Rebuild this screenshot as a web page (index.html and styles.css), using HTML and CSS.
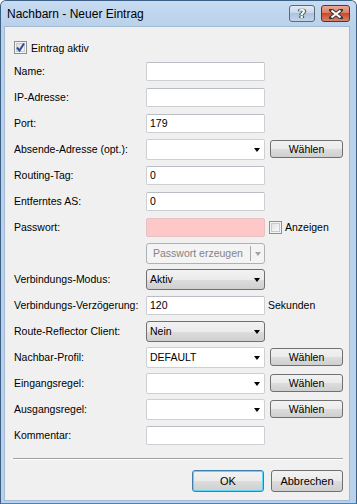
FILE: index.html
```html
<!DOCTYPE html>
<html lang="de">
<head>
<meta charset="utf-8">
<title>Nachbarn - Neuer Eintrag</title>
<link rel="stylesheet" href="styles.css">
</head>
<body>
<div class="window">
  <div class="titlebar">
    <span class="title">Nachbarn - Neuer Eintrag</span>
    <div class="caption-btns">
      <div class="cap-btn help">?</div>
      <div class="cap-btn close">
        <svg width="14" height="10" viewBox="0 0 14 10"><path d="M2 1 L12 9 M12 1 L2 9" stroke="#3a3a3a" stroke-width="4" stroke-linecap="square"/><path d="M2.5 1.5 L11.5 8.5 M11.5 1.5 L2.5 8.5" stroke="#fff" stroke-width="2"/></svg>
      </div>
    </div>
  </div>
  <div class="client">
    <div class="check-row">
      <span class="checkbox checked"><svg width="11" height="11" viewBox="0 0 11 11"><path d="M2 5.5 L4.5 8.5 L9 1.5" fill="none" stroke="#2b4f9c" stroke-width="2"/></svg></span>
      <span class="check-label">Eintrag aktiv</span>
    </div>
    <div class="form">
      <div class="row"><span class="label">Name:</span><span class="input"></span></div>
      <div class="row"><span class="label">IP-Adresse:</span><span class="input"></span></div>
      <div class="row"><span class="label">Port:</span><span class="input">179</span></div>
      <div class="row"><span class="label">Absende-Adresse (opt.):</span><span class="combo"><span class="val"></span><span class="arrow"></span></span><span class="btn small">Wählen</span></div>
      <div class="row"><span class="label">Routing-Tag:</span><span class="input">0</span></div>
      <div class="row"><span class="label">Entferntes AS:</span><span class="input">0</span></div>
      <div class="row"><span class="label">Passwort:</span><span class="input pink"></span><span class="extra-check"><span class="checkbox"></span><span class="check-label">Anzeigen</span></span></div>
      <div class="row"><span class="label"></span><span class="split-btn"><span class="split-text">Passwort erzeugen</span><span class="split-div"></span><span class="arrow gray"></span></span></div>
      <div class="row"><span class="label">Verbindungs-Modus:</span><span class="dropbtn"><span class="val">Aktiv</span><span class="arrow"></span></span></div>
      <div class="row"><span class="label">Verbindungs-Verzögerung:</span><span class="input">120</span><span class="unit">Sekunden</span></div>
      <div class="row"><span class="label">Route-Reflector Client:</span><span class="dropbtn"><span class="val">Nein</span><span class="arrow"></span></span></div>
      <div class="row"><span class="label">Nachbar-Profil:</span><span class="combo"><span class="val">DEFAULT</span><span class="arrow"></span></span><span class="btn small">Wählen</span></div>
      <div class="row"><span class="label">Eingangsregel:</span><span class="combo"><span class="val"></span><span class="arrow"></span></span><span class="btn small">Wählen</span></div>
      <div class="row"><span class="label">Ausgangsregel:</span><span class="combo"><span class="val"></span><span class="arrow"></span></span><span class="btn small">Wählen</span></div>
      <div class="row"><span class="label">Kommentar:</span><span class="input"></span></div>
    </div>
    <div class="separator"></div>
    <div class="footer">
      <span class="btn big default">OK</span>
      <span class="btn big">Abbrechen</span>
    </div>
  </div>
</div>
</body>
</html>
```
FILE: styles.css
```css
html, body {
  margin: 0;
  padding: 0;
}
body {
  width: 357px;
  height: 504px;
  overflow: hidden;
  font-family: "Liberation Sans", Arial, sans-serif;
  font-size: 10.5px;
  color: #000;
  background: #fff;
}
.window {
  width: 357px;
  height: 504px;
  box-sizing: border-box;
  border: 1px solid #3c5f86;
  border-bottom-color: #2a8fcf;
  border-radius: 6px 6px 0 0;
  background: #b9d1ea;
  padding: 0 6px 2px 3px;
  display: flex;
  flex-direction: column;
}
.titlebar {
  height: 25px;
  display: flex;
  align-items: center;
  justify-content: space-between;
  background: linear-gradient(#c7dbf1, #b9d1ea);
  margin: 0 -6px 0 -3px;
  padding: 0 6px 0 6px;
  border-radius: 5px 5px 0 0;
}
.title {
  font-size: 12px;
  color: #000;
  padding-top: 1px;
}
.caption-btns {
  display: flex;
  gap: 6px;
  align-self: flex-start;
  margin-top: 4px;
}
.cap-btn {
  height: 15px;
  border: 1px solid #5a6b80;
  border-radius: 3px;
  display: flex;
  align-items: center;
  justify-content: center;
}
.help {
  width: 24px;
  background: linear-gradient(#e3ecf6, #c4d5e8 50%, #aec3dc 50%, #c2d4e8);
  color: #fff;
  font-weight: bold;
  font-size: 13px;
  text-shadow: 0 0 1px #2a3a50, 0 0 1px #2a3a50, 1px 0 0 #2a3a50, -1px 0 0 #2a3a50;
  font-family: "DejaVu Sans", sans-serif;
}
.close {
  width: 27px;
  border-color: #6d2b22;
  background: linear-gradient(#e9a99a, #d8785f 50%, #c74a2c 50%, #d7826a);
}
.client {
  flex: 1;
  background: #f0f0f0;
  border: 1px solid #a3bad3;
  padding: 14px 6px 0 9px;
  display: flex;
  flex-direction: column;
}
.check-row {
  display: flex;
  align-items: center;
  height: 13px;
}
.checkbox {
  width: 13px;
  height: 13px;
  box-sizing: border-box;
  border: 1px solid #8e8f8f;
  background: linear-gradient(135deg, #dcdcdc, #ffffff);
  box-shadow: inset 0 0 0 1px #f4f4f4, inset 0 0 0 2px #c9cbcd;
  display: inline-flex;
  align-items: center;
  justify-content: center;
  flex: none;
}
.checkbox.checked {
  background: linear-gradient(135deg, #d5d8dd, #fbfbfb);
}
.check-label {
  margin-left: 4px;
}
.form {
  margin-top: 4px;
  display: flex;
  flex-direction: column;
}
.row {
  height: 26px;
  display: grid;
  grid-template-columns: 132px 119px auto;
  align-items: center;
}
.input {
  height: 19px;
  box-sizing: border-box;
  background: #fff;
  border: 1px solid #ccd0d5;
  border-top-color: #b9bdc3;
  border-radius: 2px;
  padding: 0 3px;
  display: flex;
  align-items: center;
  line-height: 1;
}
.input.pink {
  background: #ffc8c8;
  border-color: #e6c2c2;
}
.combo, .dropbtn {
  height: 21px;
  box-sizing: border-box;
  display: flex;
  align-items: center;
  justify-content: space-between;
  padding: 0 4px 0 3px;
}
.combo {
  background: #fff;
  border: 1px solid #ccd0d5;
  border-radius: 2px;
}
.dropbtn {
  border: 1px solid #707070;
  border-radius: 3px;
  background: linear-gradient(#f2f2f2, #ebebeb 50%, #dddddd 50%, #cfcfcf);
}
.arrow {
  width: 0;
  height: 0;
  border-left: 3.5px solid transparent;
  border-right: 3.5px solid transparent;
  border-top: 4px solid #000;
  margin-top: 1px;
}
.arrow.gray {
  border-top-color: #a3a3a3;
}
.btn {
  box-sizing: border-box;
  border: 1px solid #707070;
  border-radius: 3px;
  background: linear-gradient(#f2f2f2, #ebebeb 50%, #dddddd 50%, #cfcfcf);
  display: flex;
  align-items: center;
  justify-content: center;
}
.btn.small {
  width: 73px;
  height: 18px;
  margin-left: 5px;
}
.btn.big {
  width: 72px;
  height: 22px;
  font-size: 11px;
}
.btn.default {
  border-color: #3c7fb1;
  box-shadow: inset 0 0 0 1px #5fd7fb;
}
.extra-check {
  display: flex;
  align-items: center;
  margin-left: 4px;
}
.extra-check .check-label {
  margin-left: 3px;
}
.split-btn {
  height: 21px;
  box-sizing: border-box;
  border: 1px solid #adb2b5;
  border-radius: 3px;
  background: #f4f4f4;
  color: #838383;
  display: flex;
  align-items: center;
  padding: 0 3px 0 6px;
  font-size: 10.5px;
}
.split-text {
  flex: 1;
  white-space: nowrap;
}
.split-div {
  width: 1px;
  height: 15px;
  background: #a8a8a8;
  margin-right: 4px;
}
.unit {
  margin-left: 3px;
}
.separator {
  margin: 10px 0 0 -1px;
  height: 0;
  border-top: 1px solid #a0a0a0;
  border-bottom: 1px solid #ffffff;
}
.footer {
  margin-top: 10px;
  display: flex;
  justify-content: flex-end;
  gap: 7px;
}
```
